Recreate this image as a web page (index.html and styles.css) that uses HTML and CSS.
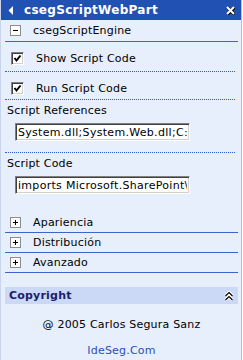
FILE: index.html
```html
<!DOCTYPE html>
<html lang="es">
  <head>
    <meta charset="UTF-8" />
    <title>csegScriptWebPart</title>
    <link rel="stylesheet" href="styles.css">
  </head>
  <body>
    <div class="pane">
      <!-- barra de titulo -->
      <div class="title-bar">
        <svg class="back" width="6" height="9" viewBox="0 0 6 9">
          <polygon points="5,0 5,9 0.5,4.5" fill="#fff" />
        </svg>
        <span class="title">csegScriptWebPart</span>
        <svg class="close" width="9" height="9" viewBox="0 0 9 9">
          <path d="M1 1 L8 8 M8 1 L1 8" stroke="#000" stroke-width="3" transform="translate(0.5 0.5)" />
          <path d="M1 1 L8 8 M8 1 L1 8" stroke="#fff" stroke-width="2" />
        </svg>
      </div>

      <div class="body">
        <!-- seccion abierta -->
        <div class="section open">
          <span class="toggle">
            <svg width="9" height="9" viewBox="0 0 9 9"><path d="M2 4.5 H7" stroke="#000" /></svg>
          </span>
          <span>csegScriptEngine</span>
        </div>

        <div class="field check first">
          <span class="box">
            <svg width="9" height="9" viewBox="0 0 9 9"><path d="M1.5 4 L3.5 6.5 L7.5 1.5" fill="none" stroke="#000" stroke-width="2" /></svg>
          </span>
          <span>Show Script Code</span>
        </div>
        <div class="field check">
          <span class="box">
            <svg width="9" height="9" viewBox="0 0 9 9"><path d="M1.5 4 L3.5 6.5 L7.5 1.5" fill="none" stroke="#000" stroke-width="2" /></svg>
          </span>
          <span>Run Script Code</span>
        </div>

        <div class="field text">
          <div class="label">Script References</div>
          <input class="input" type="text" value="System.dll;System.Web.dll;C:\Program Files" />
        </div>
        <div class="field text last">
          <div class="label">Script Code</div>
          <input class="input" type="text" value="imports Microsoft.SharePoint\WebPartPages" />
        </div>

        <!-- secciones cerradas -->
        <div class="closed-list">
          <div class="section">
            <span class="toggle">
              <svg width="9" height="9" viewBox="0 0 9 9"><path d="M2 4.5 H7 M4.5 2 V7" stroke="#000" /></svg>
            </span>
            <span>Apariencia</span>
          </div>
          <div class="section">
            <span class="toggle">
              <svg width="9" height="9" viewBox="0 0 9 9"><path d="M2 4.5 H7 M4.5 2 V7" stroke="#000" /></svg>
            </span>
            <span>Distribución</span>
          </div>
          <div class="section">
            <span class="toggle">
              <svg width="9" height="9" viewBox="0 0 9 9"><path d="M2 4.5 H7 M4.5 2 V7" stroke="#000" /></svg>
            </span>
            <span>Avanzado</span>
          </div>
        </div>

        <!-- copyright -->
        <div class="copy-bar">
          <span>Copyright</span>
          <svg width="10" height="10" viewBox="0 0 10 10">
            <path d="M1.5 5 L5 1.5 L8.5 5 M1.5 9 L5 5.5 L8.5 9" fill="none" stroke="#fff" stroke-width="3" />
            <path d="M1.5 5 L5 1.5 L8.5 5 M1.5 9 L5 5.5 L8.5 9" fill="none" stroke="#000" stroke-width="1.2" />
          </svg>
        </div>
        <div class="credit">@ 2005 Carlos Segura Sanz</div>
        <a class="link" href="javascript:;">IdeSeg.Com</a>
      </div>
    </div>
  </body>
</html>
```

FILE: styles.css
```css
* {
  margin: 0;
  padding: 0;
  box-sizing: border-box;
}
html,
body {
  width: 243px;
  height: 360px;
  overflow: hidden;
  background: #fff;
}
body {
  font-family: "DejaVu Sans", Verdana, sans-serif;
  font-size: 11px;
  letter-spacing: 0.2px;
  color: #000;
}

.pane {
  display: flex;
  flex-direction: column;
  width: 242px;
  height: 360px;
  background: #e7eefc;
  border-left: 1px solid #c9d5ee;
  border-right: 1px solid #b4c0d8;
}

/* barra de titulo */
.title-bar {
  display: flex;
  align-items: center;
  height: 20px;
  padding: 0 5px 0 7px;
  background: #2152b3;
  color: #fff;
}
.title-bar .title {
  flex: 1;
  margin-left: 10px;
  font-weight: bold;
  font-size: 12px;
  letter-spacing: 0.3px;
}
.title-bar .close {
  margin-right: 1px;
}

.body {
  display: flex;
  flex-direction: column;
  padding: 0 3px 0 4px;
}

/* secciones */
.section {
  display: flex;
  align-items: center;
  height: 20px;
  padding-left: 5px;
  border-bottom: 1px solid #3a66cc;
}
.section.open {
  height: 22px;
}
.toggle {
  display: flex;
  width: 11px;
  height: 11px;
  margin-right: 12px;
  border: 1px solid #8c8c8c;
  background: #fff;
}

/* campos */
.field {
  border-bottom: 1px dotted #2d5fd4;
  margin-right: 3px;
}
.check {
  display: flex;
  align-items: center;
  padding: 10px 0 4px 6px;
}
.check.first {
  padding-bottom: 6px;
}
.box {
  display: flex;
  align-items: center;
  justify-content: center;
  width: 13px;
  height: 13px;
  margin-right: 12px;
  border-style: solid;
  border-width: 1px;
  border-color: #808080 #fff #fff #808080;
  box-shadow: inset 1px 1px 0 #404040, inset -1px -1px 0 #d4d0c8;
  background: #fff;
}
.text {
  padding: 4px 0 11px 2px;
}
.text.last {
  border-bottom: 0;
}
.label {
  line-height: 14px;
}
.input {
  display: block;
  width: 175px;
  height: 18px;
  margin: 5px 0 0 8px;
  padding: 0 2px;
  font-family: "DejaVu Sans", Verdana, sans-serif;
  font-size: 11px;
  letter-spacing: 0.3px;
  color: #000;
  background: #fff;
  border-style: solid;
  border-width: 1px;
  border-color: #808080 #fff #fff #808080;
  box-shadow: inset 1px 1px 0 #404040, inset -1px -1px 0 #d4d0c8;
  outline: none;
}

.closed-list {
  display: flex;
  flex-direction: column;
  margin-top: 8px;
}

/* copyright */
.copy-bar {
  display: flex;
  align-items: center;
  justify-content: space-between;
  height: 17px;
  margin-top: 14px;
  padding: 0 4px 0 4px;
  background: #cbd9f7;
  color: #1c1c6e;
  font-weight: bold;
}
.credit {
  margin-top: 14px;
  text-align: center;
  line-height: 14px;
}
.link {
  display: block;
  margin-top: 12px;
  text-align: center;
  line-height: 14px;
  color: #2a4fb6;
  text-decoration: none;
}
```
